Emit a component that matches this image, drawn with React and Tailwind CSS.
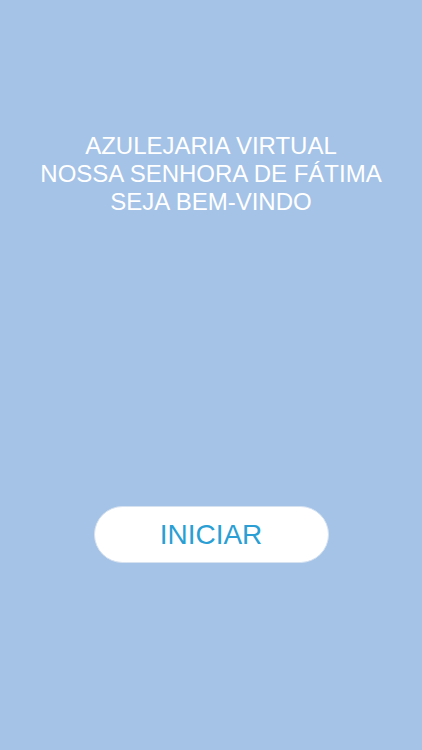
export default function App() {
  return (
    <div
      className="flex h-[750px] w-full flex-col items-center bg-[#a5c3e7]"
      style={{ fontFamily: '"Liberation Sans", Arial, sans-serif' }}
    >
      <div className="mt-[132px] text-center text-[24px] leading-[28px] text-white">
        <p>AZULEJARIA VIRTUAL</p>
        <p>NOSSA SENHORA DE FÁTIMA</p>
        <p>SEJA BEM-VINDO</p>
      </div>
      <button className="mt-[290px] flex h-[57px] w-[235px] items-center justify-center rounded-full border border-[#d6e2f0] bg-white text-[28px] text-[#2b9fd4]">
        INICIAR
      </button>
    </div>
  );
}
